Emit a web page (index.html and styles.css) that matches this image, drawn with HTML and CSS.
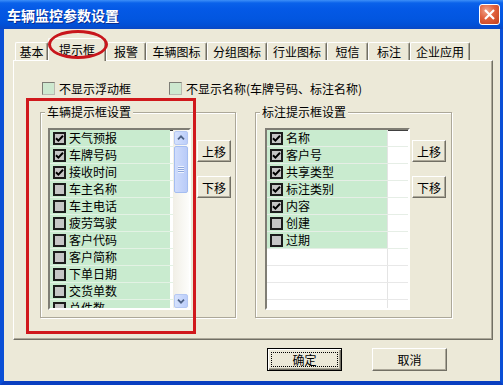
FILE: index.html
```html
<!DOCTYPE html>
<html>
<head>
    <title>车辆监控参数设置</title>
    <link rel="stylesheet" href="styles.css">
</head>
<body>
    <div class="window">
        <div class="titlebar">
            <span class="title">车辆监控参数设置</span>
            <span class="close-btn">
                <svg width="19" height="19" viewBox="0 0 19 19"><path d="M5 5 L14 14 M14 5 L5 14" stroke="#fff" stroke-width="2.2" fill="none"/></svg>
            </span>
        </div>
        <div class="frame">
            <div class="tabs">
                <span class="tab" style="width: 33px">基本</span>
                <span class="tab active" style="width: 58px">提示框</span>
                <span class="tab" style="width: 40px">报警</span>
                <span class="tab" style="width: 61px">车辆图标</span>
                <span class="tab" style="width: 60px">分组图标</span>
                <span class="tab" style="width: 60px">行业图标</span>
                <span class="tab" style="width: 41px">短信</span>
                <span class="tab" style="width: 42px">标注</span>
                <span class="tab" style="width: 60px">企业应用</span>
            </div>
            <div class="panel">
                <div class="options">
                    <label class="option first"><span class="opt-box"></span>不显示浮动框</label>
                    <label class="option"><span class="opt-box"></span>不显示名称(车牌号码、标注名称)</label>
                </div>
                <div class="groups">
                    <div class="group group-left">
                        <span class="group-title">车辆提示框设置</span>
                        <div class="group-body">
                            <div class="list list-left">
                                <div class="rows">
                                    <div class="row"><span class="cell"><span class="chk"><svg width="9" height="9" viewBox="0 0 9 9"><polyline points="1,4.2 3.4,6.6 8,1.8" stroke="#000" stroke-width="2" fill="none"/></svg></span>天气预报</span></div>
                                    <div class="row"><span class="cell"><span class="chk"><svg width="9" height="9" viewBox="0 0 9 9"><polyline points="1,4.2 3.4,6.6 8,1.8" stroke="#000" stroke-width="2" fill="none"/></svg></span>车牌号码</span></div>
                                    <div class="row"><span class="cell"><span class="chk"><svg width="9" height="9" viewBox="0 0 9 9"><polyline points="1,4.2 3.4,6.6 8,1.8" stroke="#000" stroke-width="2" fill="none"/></svg></span>接收时间</span></div>
                                    <div class="row"><span class="cell"><span class="chk"></span>车主名称</span></div>
                                    <div class="row"><span class="cell"><span class="chk"></span>车主电话</span></div>
                                    <div class="row"><span class="cell"><span class="chk"></span>疲劳驾驶</span></div>
                                    <div class="row"><span class="cell"><span class="chk"></span>客户代码</span></div>
                                    <div class="row"><span class="cell"><span class="chk"></span>客户简称</span></div>
                                    <div class="row"><span class="cell"><span class="chk"></span>下单日期</span></div>
                                    <div class="row"><span class="cell"><span class="chk"></span>交货单数</span></div>
                                    <div class="row"><span class="cell"><span class="chk"></span>总件数</span></div>
                                </div>
                                <div class="scrollbar">
                                    <span class="sb-btn"><svg width="14" height="14" viewBox="0 0 14 14"><polyline points="3.5,8.5 7,5 10.5,8.5" stroke="#4d6185" stroke-width="2" fill="none"/></svg></span>
                                    <span class="sb-thumb"><span class="grip"></span></span>
                                    <span class="sb-track"></span>
                                    <span class="sb-btn"><svg width="14" height="14" viewBox="0 0 14 14"><polyline points="3.5,5.5 7,9 10.5,5.5" stroke="#4d6185" stroke-width="2" fill="none"/></svg></span>
                                </div>
                            </div>
                            <div class="side-buttons">
                                <span class="btn small">上移</span>
                                <span class="btn small">下移</span>
                            </div>
                        </div>
                    </div>
                    <div class="group group-right">
                        <span class="group-title">标注提示框设置</span>
                        <div class="group-body">
                            <div class="list list-right">
                                <div class="row"><span class="cell"><span class="chk"><svg width="9" height="9" viewBox="0 0 9 9"><polyline points="1,4.2 3.4,6.6 8,1.8" stroke="#000" stroke-width="2" fill="none"/></svg></span>名称</span><span class="cell-extra"></span></div>
                                <div class="row"><span class="cell"><span class="chk"><svg width="9" height="9" viewBox="0 0 9 9"><polyline points="1,4.2 3.4,6.6 8,1.8" stroke="#000" stroke-width="2" fill="none"/></svg></span>客户号</span><span class="cell-extra"></span></div>
                                <div class="row"><span class="cell"><span class="chk"><svg width="9" height="9" viewBox="0 0 9 9"><polyline points="1,4.2 3.4,6.6 8,1.8" stroke="#000" stroke-width="2" fill="none"/></svg></span>共享类型</span><span class="cell-extra"></span></div>
                                <div class="row"><span class="cell"><span class="chk"><svg width="9" height="9" viewBox="0 0 9 9"><polyline points="1,4.2 3.4,6.6 8,1.8" stroke="#000" stroke-width="2" fill="none"/></svg></span>标注类别</span><span class="cell-extra"></span></div>
                                <div class="row"><span class="cell"><span class="chk"><svg width="9" height="9" viewBox="0 0 9 9"><polyline points="1,4.2 3.4,6.6 8,1.8" stroke="#000" stroke-width="2" fill="none"/></svg></span>内容</span><span class="cell-extra"></span></div>
                                <div class="row"><span class="cell"><span class="chk"></span>创建</span><span class="cell-extra"></span></div>
                                <div class="row"><span class="cell"><span class="chk"></span>过期</span><span class="cell-extra"></span></div>
                                <div class="row empty"><span class="cell"></span><span class="cell-extra"></span></div>
                                <div class="row empty"><span class="cell"></span><span class="cell-extra"></span></div>
                                <div class="row empty"><span class="cell"></span><span class="cell-extra"></span></div>
                                <div class="row empty"><span class="cell"></span><span class="cell-extra"></span></div>
                            </div>
                            <div class="side-buttons">
                                <span class="btn small">上移</span>
                                <span class="btn small">下移</span>
                            </div>
                        </div>
                    </div>
                </div>
            </div>
            <div class="footer">
                <span class="btn wide default">确定</span>
                <span class="btn wide">取消</span>
            </div>
        </div>
        <div class="mark-ring"></div>
        <div class="mark-box"></div>
    </div>
</body>
</html>
```

FILE: styles.css
```css
body {
    margin: 0;
    font-family: "Noto Sans CJK SC", "Noto Sans", sans-serif;
    font-size: 12px;
    color: #000;
    background: #ece9d8;
}
.window {
    position: relative;
    width: 503px;
    height: 385px;
    display: flex;
    flex-direction: column;
    overflow: hidden;
    background: #ece9d8;
}
.titlebar {
    flex: none;
    height: 29px;
    box-sizing: border-box;
    display: flex;
    align-items: center;
    justify-content: space-between;
    padding: 0 3px 0 7px;
    background: linear-gradient(to bottom, #3d8ff8 0px, #0a62ea 3px, #0459e6 9px, #0256e0 19px, #0150d6 25px, #0a48c4 29px);
}
.title {
    color: #fff;
    font-size: 14px;
    font-weight: bold;
    text-shadow: 1px 1px 0 #0b2c8e;
}
.close-btn {
    width: 21px;
    height: 21px;
    box-sizing: border-box;
    border: 1px solid #fff;
    border-radius: 3px;
    display: flex;
    align-items: center;
    justify-content: center;
    background: radial-gradient(circle at 35% 30%, #f0a58c 0%, #e0603c 45%, #c2401c 100%);
}
.frame {
    flex: 1;
    display: flex;
    flex-direction: column;
    border-left: 4px solid #0a4fd6;
    border-right: 3px solid #0a4fd6;
    border-bottom: 4px solid #0a3fc0;
    padding: 9px 7px 0 9px;
}

/* tabs */
.tabs {
    display: flex;
    align-items: flex-end;
    height: 22px;
    padding-left: 2px;
    position: relative;
    z-index: 1;
}
.tab {
    height: 18px;
    box-sizing: border-box;
    border-top: 1px solid #fff;
    border-left: 1px solid #fff;
    border-right: 1px solid #716f64;
    box-shadow: inset -1px 0 0 #aca899;
    border-radius: 2px 2px 0 0;
    text-align: center;
    line-height: 17px;
    background: #ece9d8;
}
.tab.active {
    height: 23px;
    margin-bottom: -1px;
    padding-top: 2px;
    line-height: 17px;
}

/* panel */
.panel {
    width: 480px;
    height: 280px;
    box-sizing: border-box;
    border: 1px solid;
    border-color: #fff #716f64 #716f64 #fff;
    box-shadow: inset -1px -1px 0 #aca899;
    padding: 21px 0 0 26px;
}
.options {
    display: flex;
    height: 13px;
    align-items: center;
    margin-left: 2px;
}
.option {
    display: flex;
    align-items: center;
    gap: 4px;
    line-height: 13px;
}
.option.first {
    width: 127px;
}
.opt-box {
    width: 13px;
    height: 13px;
    box-sizing: border-box;
    border: 1px solid;
    border-color: #7d7d75 #b9b9b0 #b9b9b0 #7d7d75;
    background: #cde8cf;
}
.groups {
    display: flex;
    gap: 19px;
    margin-top: 17px;
}
.group {
    height: 206px;
    box-sizing: border-box;
    border: 1px solid #aca899;
    box-shadow: inset 1px 1px 0 #fff, 1px 1px 0 #fff;
    display: flex;
    flex-direction: column;
    align-items: flex-start;
}
.group-left {
    width: 196px;
}
.group-right {
    width: 197px;
}
.group-title {
    margin: -8px 0 0 4px;
    padding: 0 2px;
    line-height: 14px;
    background: #ece9d8;
}
.group-body {
    display: flex;
    margin-top: 9px;
    padding-left: 7px;
}
.group-right .group-body {
    padding-left: 9px;
}

/* lists */
.list {
    height: 182px;
    box-sizing: border-box;
    border: 2px solid;
    border-color: #7f7d74 #fff #fff #7f7d74;
    box-shadow: inset 1px 1px 0 #404040;
    background: #fff;
    overflow: hidden;
}
.list-left {
    width: 143px;
    display: flex;
}
.list-right {
    width: 145px;
}
.rows {
    width: 123px;
    overflow: hidden;
}
.row {
    display: flex;
    height: 17px;
    box-sizing: border-box;
    border-bottom: 1px solid #e3f2e4;
}
.cell {
    width: 120px;
    flex: none;
    display: flex;
    align-items: center;
    gap: 3px;
    padding-left: 3px;
    box-sizing: border-box;
    background: #c9ebcf;
    line-height: 16px;
}
.list-right .cell {
    width: 121px;
    border-right: 1px solid #e4e4e4;
}
.list-right .row {
    border-bottom-color: #e6eee6;
}
.list-right .row.empty {
    border-bottom-color: #e8e8e8;
}
.row.empty .cell {
    background: #fff;
}
.cell-extra {
    flex: 1;
}
.chk {
    width: 13px;
    height: 13px;
    flex: none;
    box-sizing: border-box;
    border: 2px solid #1c1c1c;
    background: #c6c6c6;
    display: flex;
    align-items: center;
    justify-content: center;
}

/* scrollbar */
.scrollbar {
    width: 16px;
    display: flex;
    flex-direction: column;
    padding-top: 1px;
    background: linear-gradient(to right, #f1efe6, #fdfdfb);
}
.sb-btn {
    height: 14px;
    box-sizing: border-box;
    margin: 0 1px;
    border: 1px solid #b5c8f3;
    border-radius: 2px;
    background: linear-gradient(to right, #d6e2fd, #bccefa);
    display: flex;
    align-items: center;
    justify-content: center;
}
.sb-thumb {
    height: 47px;
    box-sizing: border-box;
    margin: 1px 1px 0;
    border: 1px solid #a4bdf1;
    border-radius: 2px;
    background: linear-gradient(to right, #cfdcfc, #b9cbf8);
    display: flex;
    align-items: center;
    justify-content: center;
}
.grip {
    width: 6px;
    height: 7px;
    background: repeating-linear-gradient(to bottom, #eef3fe 0, #eef3fe 1px, #8ea7dc 1px, #8ea7dc 2px);
}
.sb-track {
    flex: 1;
}

/* buttons */
.btn {
    display: flex;
    align-items: center;
    justify-content: center;
    box-sizing: border-box;
    background: #ece9d8;
    border: 1px solid;
    border-color: #fff #716f64 #716f64 #fff;
    box-shadow: inset -1px -1px 0 #aca899;
}
.btn.small {
    width: 34px;
    height: 22px;
}
.side-buttons {
    display: flex;
    flex-direction: column;
    gap: 14px;
    padding-top: 12px;
    margin-left: 6px;
}
.group-right .side-buttons {
    margin-left: 2px;
}
.footer {
    display: flex;
    justify-content: flex-end;
    gap: 30px;
    padding: 8px 46px 0 0;
}
.btn.wide {
    width: 75px;
    height: 23px;
}
.btn.default {
    border: 1px solid #000;
    box-shadow: inset 1px 1px 0 #fff, inset -1px -1px 0 #716f64, inset -2px -2px 0 #aca899;
    outline: 1px dotted #000;
    outline-offset: -5px;
}

/* red annotations */
.mark-ring {
    position: absolute;
    left: 48px;
    top: 30px;
    width: 60px;
    height: 29px;
    box-sizing: border-box;
    border: 3px solid #c8161c;
    border-radius: 50%;
    z-index: 2;
}
.mark-box {
    position: absolute;
    left: 26px;
    top: 98px;
    width: 170px;
    height: 236px;
    box-sizing: border-box;
    border: 3px solid #d0181c;
    z-index: 2;
}
```
